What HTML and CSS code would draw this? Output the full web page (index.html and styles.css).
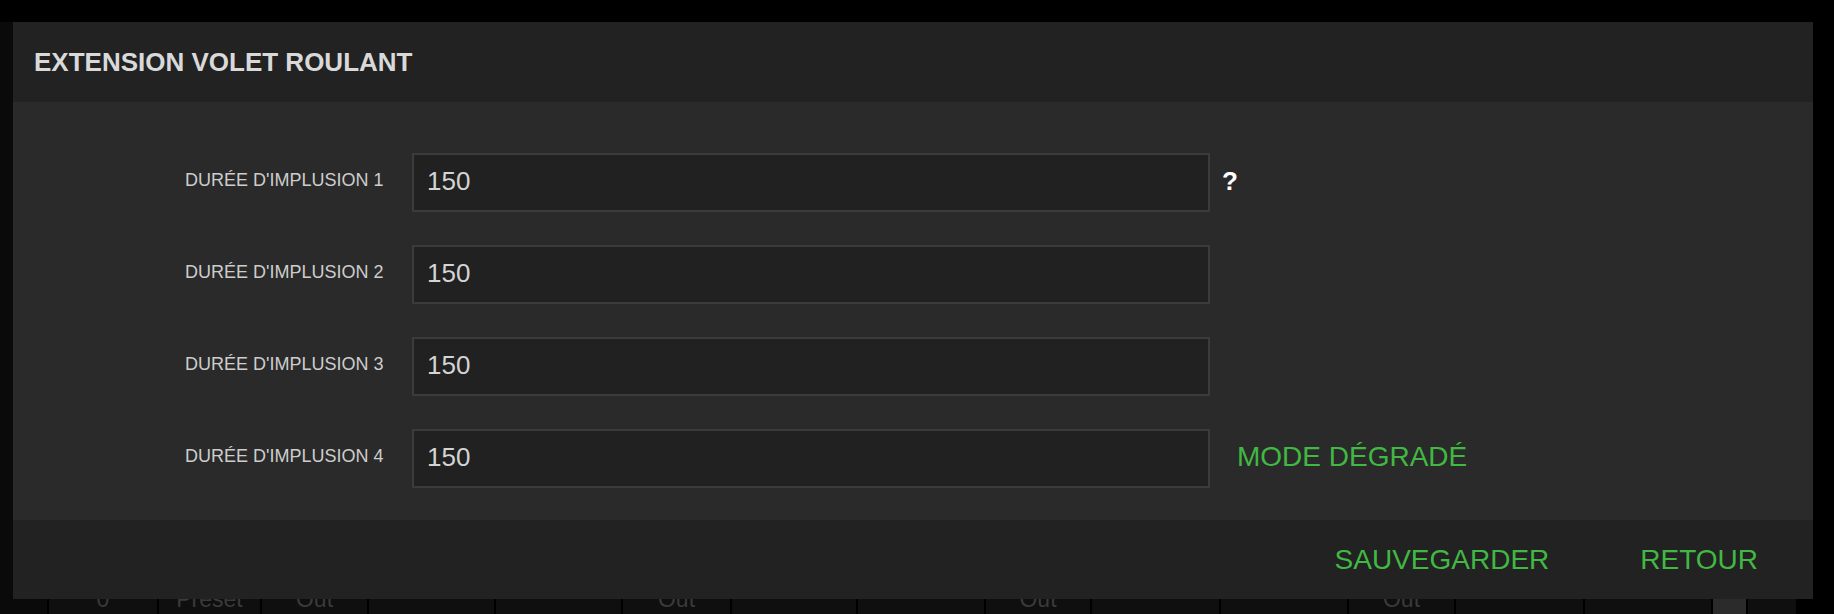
FILE: index.html
```html
<!DOCTYPE html>
<html lang="fr">
<head>
    <meta charset="UTF-8">
    <title>Extension volet roulant</title>
    <link rel="stylesheet" href="styles.css">
</head>
<body>
    <div class="page">
        <div class="grid-row">
            <div class="cell">0</div>
            <div class="cell">Preset</div>
            <div class="cell">Out</div>
            <div class="cell"></div>
            <div class="cell"></div>
            <div class="cell">Out</div>
            <div class="cell"></div>
            <div class="cell"></div>
            <div class="cell">Out</div>
            <div class="cell"></div>
            <div class="cell"></div>
            <div class="cell">Out</div>
            <div class="cell"></div>
            <div class="cell"></div>
            <div class="cell scroll"></div>
            <div class="cell"></div>
        </div>
    </div>

    <div class="modal">
        <div class="modal-header">
            <h2 class="modal-title">EXTENSION VOLET ROULANT</h2>
        </div>
        <div class="modal-body">
            <div class="field">
                <label class="label" for="pulse1">DURÉE D'IMPLUSION 1</label>
                <input type="text" id="pulse1" value="150">
                <span class="help">?</span>
            </div>
            <div class="field">
                <label class="label" for="pulse2">DURÉE D'IMPLUSION 2</label>
                <input type="text" id="pulse2" value="150">
            </div>
            <div class="field">
                <label class="label" for="pulse3">DURÉE D'IMPLUSION 3</label>
                <input type="text" id="pulse3" value="150">
            </div>
            <div class="field">
                <label class="label" for="pulse4">DURÉE D'IMPLUSION 4</label>
                <input type="text" id="pulse4" value="150">
                <button class="link mode">MODE DÉGRADÉ</button>
            </div>
        </div>
        <div class="modal-footer">
            <button class="link">SAUVEGARDER</button>
            <button class="link">RETOUR</button>
        </div>
    </div>
</body>
</html>
```

FILE: styles.css
```css
body {
    font-family: "Liberation Sans", Arial, sans-serif;
    margin: 0;
    padding: 0;
    background: #000;
    height: 614px;
    overflow: hidden;
    position: relative;
}
.page {
    margin-top: 22px;
    width: 1796px;
    height: 592px;
    background: #0a0a0a;
    padding-top: 550px;
    box-sizing: border-box;
}
.grid-row {
    display: grid;
    grid-template-columns: 110px 103px 107px 127px 127px 109px 126px 128px 106px 129px 128px 107px 129px 128px 35px 50px;
    margin-left: 47px;
    height: 56px;
}
.cell {
    background: #0f0f0f;
    border-left: 2px solid #000;
    color: #3a3a3a;
    font-size: 23px;
    display: flex;
    align-items: center;
    justify-content: center;
    padding-bottom: 2px;
}
.cell.scroll {
    background: #2b2b2b;
}
.modal {
    position: absolute;
    top: 22px;
    left: 13px;
    width: 1800px;
    background: #2a2a2a;
}
.modal-header {
    background: #222;
    height: 80px;
    display: flex;
    align-items: center;
    padding-left: 21px;
}
.modal-title {
    margin: 0;
    font-size: 26px;
    font-weight: bold;
    color: #d9d9d9;
}
.modal-body {
    padding: 51px 0 32px 172px;
    display: flex;
    flex-direction: column;
    gap: 33px;
}
.field {
    display: flex;
    align-items: center;
    height: 59px;
}
.label {
    flex-shrink: 0;
    width: 197px;
    margin-right: 30px;
    font-size: 18px;
    color: #cdcdcd;
    white-space: nowrap;
    margin-top: -4px;
}
.field input {
    flex-shrink: 0;
    width: 798px;
    height: 59px;
    box-sizing: border-box;
    background: #212121;
    border: 2px solid #3b3b3b;
    color: #d4d4d4;
    font-family: inherit;
    font-size: 26px;
    padding: 0 13px 2px;
    outline: none;
}
.help {
    margin-left: 12px;
    font-size: 26px;
    font-weight: bold;
    color: #fff;
    margin-top: -2px;
}
.link {
    background: none;
    border: none;
    padding: 0;
    font-family: inherit;
    font-size: 28px;
    color: #41b843;
    cursor: pointer;
}
.mode {
    margin-left: 27px;
    margin-top: -4px;
}
.modal-footer {
    background: #222;
    height: 79px;
    display: flex;
    align-items: center;
    justify-content: flex-end;
    gap: 91px;
    padding-right: 55px;
}
```
